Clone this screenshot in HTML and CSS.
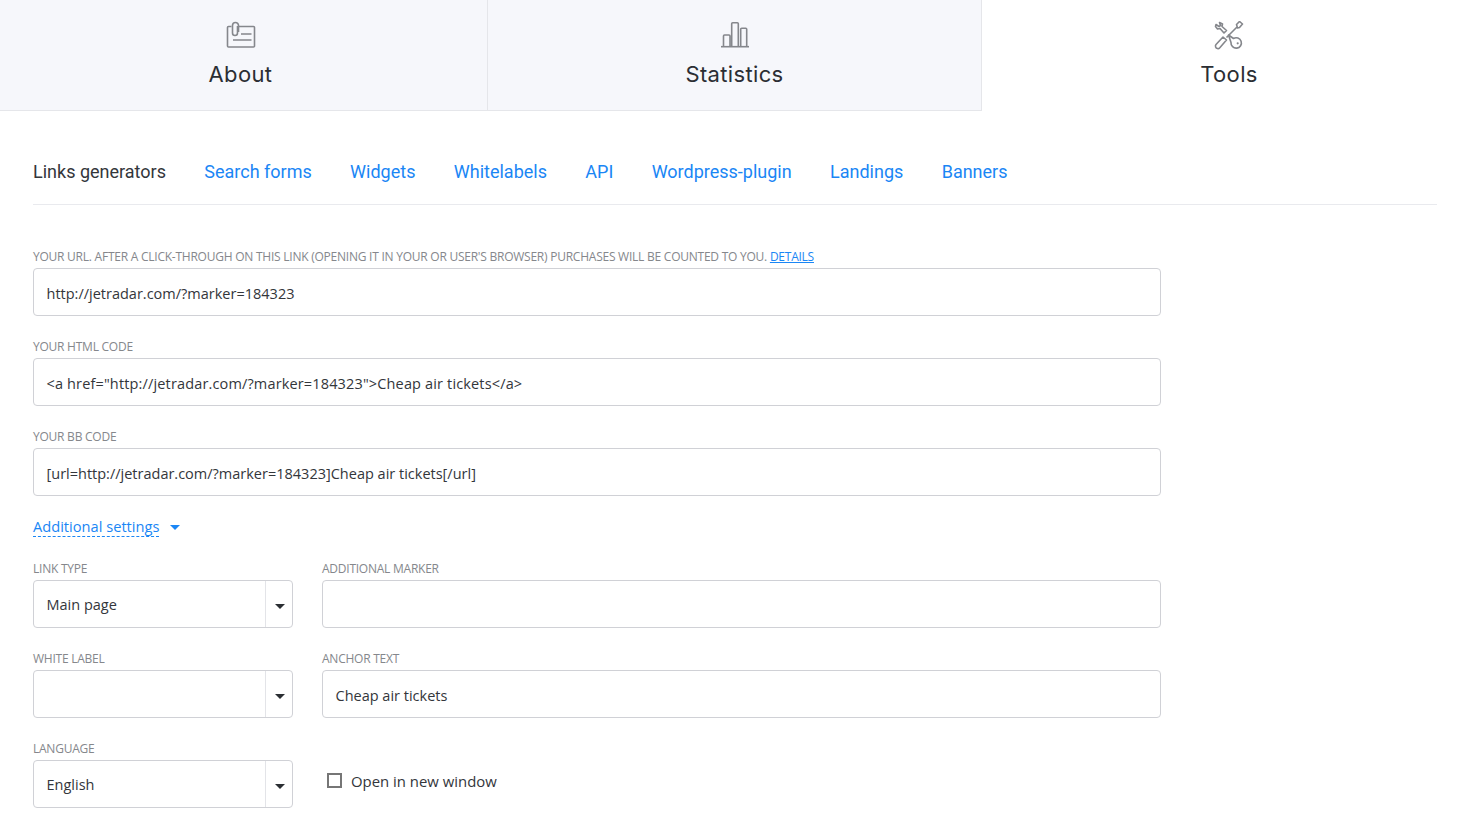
FILE: index.html
```html
<!DOCTYPE html>
<html lang="en">
<head>
<meta charset="utf-8">
<title>Tools</title>
<link rel="stylesheet" href="styles.css">
</head>
<body>
<nav class="tabs">
  <a class="tab">
    <svg class="tab-icon" viewBox="0 0 30 30" fill="none" stroke="#85878c" stroke-width="1.600"><path d="M5.500 5.500H2.500a1 1 0 0 0-1 1V25a1 1 0 0 0 1 1h25a1 1 0 0 0 1-1V6.500a1 1 0 0 0-1-1H12.500"/><path d="M12.500 11V4.500a3 3 0 0 0-6 0V12a2.500 2.500 0 0 0 5 0V5"/><path d="M15 13h10.500M7 19h18.500"/></svg>
    <span>About</span>
  </a>
  <a class="tab">
    <svg class="tab-icon" viewBox="0 0 30 30" fill="none" stroke="#85878c" stroke-width="1.600"><path d="M1 25.700h28"/><path d="M3.500 25.700V15a1 1 0 0 1 1-1H9a1 1 0 0 1 1 1v10.700M11.700 25.700V2.700a1 1 0 0 1 1-1h4.600a1 1 0 0 1 1 1v23M20.700 25.700V8.300a1 1 0 0 1 1-1h4a1 1 0 0 1 1 1v17.400"/></svg>
    <span>Statistics</span>
  </a>
  <a class="tab tab-active">
    <svg class="tab-icon" viewBox="0 0 30 30" fill="none" stroke="#85878c" stroke-width="1.600" stroke-linejoin="round"><path d="M3.500 27.500a2.500 2.500 0 0 1-1.500-4l7-7.500 3.500 3-6.500 7.500a2 2 0 0 1-2.500 1z"/><path d="M12.500 16.500L23 6"/><path d="M22.500 3.500l3-3 3 2.500-3 3.500-2 .5z"/><path d="M5.500 1.500l3 1.500-.5 2.500 4.500 4-2.500 2.500-4-4.500-2.500.5L1.500 5.500 2 3.500l3 2 1.500-1z"/><path d="M14.500 14l5 3.500a5.200 5.200 0 1 1-2.500 4z"/><circle cx="23.700" cy="22.300" r="1.100" fill="#85878c" stroke="none"/></svg>
    <span>Tools</span>
  </a>
</nav>

<main class="content">
  <ul class="subnav">
    <li class="subnav-current">Links generators</li>
    <li><a>Search forms</a></li>
    <li><a>Widgets</a></li>
    <li><a>Whitelabels</a></li>
    <li><a>API</a></li>
    <li><a>Wordpress-plugin</a></li>
    <li><a>Landings</a></li>
    <li><a>Banners</a></li>
  </ul>

  <form class="form">
    <div class="field">
      <label class="label">YOUR URL. AFTER A CLICK-THROUGH ON THIS LINK (OPENING IT IN YOUR OR USER'S BROWSER) PURCHASES WILL BE COUNTED TO YOU. <a class="details">DETAILS</a></label>
      <div class="box">http://jetradar.com/?marker=184323</div>
    </div>
    <div class="field">
      <label class="label">YOUR HTML CODE</label>
      <div class="box box-code">&lt;a href="http://jetradar.com/?marker=184323"&gt;Cheap air tickets&lt;/a&gt;</div>
    </div>
    <div class="field field-last">
      <label class="label">YOUR BB CODE</label>
      <div class="box">[url=http://jetradar.com/?marker=184323]Cheap air tickets[/url]</div>
    </div>

    <div class="toggle"><a class="toggle-link">Additional settings</a><i class="toggle-caret"></i></div>

    <div class="settings">
      <div class="field">
        <label class="label">LINK TYPE</label>
        <div class="box select"><span class="select-value">Main page</span><span class="select-arrow"><i></i></span></div>
      </div>
      <div class="field">
        <label class="label">ADDITIONAL MARKER</label>
        <div class="box"></div>
      </div>
      <div class="field">
        <label class="label">WHITE LABEL</label>
        <div class="box select"><span class="select-value"></span><span class="select-arrow"><i></i></span></div>
      </div>
      <div class="field">
        <label class="label">ANCHOR TEXT</label>
        <div class="box">Cheap air tickets</div>
      </div>
      <div class="field">
        <label class="label">LANGUAGE</label>
        <div class="box select"><span class="select-value">English</span><span class="select-arrow"><i></i></span></div>
      </div>
      <div class="check-cell">
        <span class="checkbox"></span><span class="check-label">Open in new window</span>
      </div>
    </div>
  </form>
</main>
</body>
</html>
```
FILE: styles.css
```css
* { box-sizing: border-box; }
html, body { height: 816px; overflow: hidden; }
body {
  margin: 0;
  background: #fff;
  color: #33363b;
  font-family: "Open Sans", "Noto Sans", sans-serif;
}
.tabs {
  display: grid;
  grid-template-columns: 494px 494px 494px;
  height: 111px;
  margin-left: -6px;
}
.tab {
  display: flex;
  flex-direction: column;
  align-items: center;
  background: #f6f7fb;
  border-bottom: 1px solid #e5e6ea;
  border-right: 1px solid #e5e6ea;
  padding-top: 21px;
  font-family: Inter, Roboto, sans-serif;
  font-size: 22px;
  letter-spacing: 0.35px;
  line-height: 28px;
  color: #2b2e33;
}
.tab-active { background: #fff; border: 0; }
.tab-icon { width: 30px; height: 30px; margin-bottom: 9px; }

.content { padding: 0 31px 0 33px; }
.subnav {
  list-style: none;
  margin: 0;
  padding: 28px 0 0;
  height: 94px;
  display: flex;
  align-items: center;
  gap: 38.350px;
  border-bottom: 1px solid #e9eaee;
  font-family: Roboto, sans-serif;
  font-size: 18px;
}
.subnav a { color: #1a86f5; }
.subnav-current { color: #33363b; }

.form { width: 1128px; padding-top: 42px; }
.label {
  display: block;
  height: 21px;
  font-size: 12px;
  line-height: 20px;
  letter-spacing: -0.24px;
  color: #85878c;
  white-space: nowrap;
}
.details { color: #1a86f5; text-decoration: underline; }
.field { margin-bottom: 21px; }
.field-last { margin-bottom: 15px; }
.box {
  height: 48px;
  border: 1px solid #d0d1d6;
  border-radius: 4px;
  padding: 2px 12.500px 0;
  display: flex;
  align-items: center;
  font-size: 14.500px;
  color: #33363b;
  white-space: nowrap;
}
.box-code { letter-spacing: 0.15px; }
.toggle { display: flex; align-items: center; height: 30px; margin-bottom: 18px; }
.toggle-link {
  color: #1a86f5;
  font-size: 14.650px;
  line-height: 20px;
  border-bottom: 1px dashed #1a86f5;
}
.toggle-caret {
  margin-left: 11px;
  margin-top: 2px;
  border-top: 5px solid #1a86f5;
  border-left: 5px solid transparent;
  border-right: 5px solid transparent;
}
.settings {
  display: grid;
  grid-template-columns: 260px 839px;
  column-gap: 29px;
}
.select { padding: 0; }
.select-value { flex: 1; padding-left: 12.500px; }
.select-arrow {
  width: 27px;
  height: 100%;
  border-left: 1px solid #e3e4e8;
  display: flex;
  align-items: center;
  justify-content: center;
  padding-left: 2px;
}
.select-arrow i {
  margin-top: 5px;
  border-top: 5px solid #2b2e33;
  border-left: 5px solid transparent;
  border-right: 5px solid transparent;
}
.check-cell { display: flex; align-items: center; height: 69px; padding: 10px 0 0 5px; }
.checkbox { width: 15px; height: 15px; border: 2px solid #767676; margin-right: 9px; margin-top: 4px; }
.check-label { font-size: 14.900px; color: #33363b; margin-top: 4px; }
```
